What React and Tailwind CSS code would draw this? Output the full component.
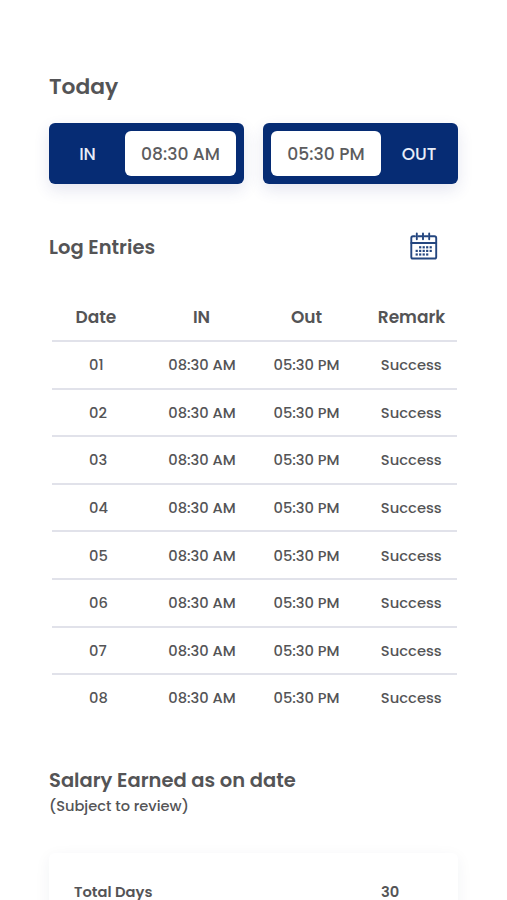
import React from 'react';

const entries = ['01', '02', '03', '04', '05', '06', '07', '08'].map((date) => ({
  date,
  timeIn: '08:30 AM',
  timeOut: '05:30 PM',
  remark: 'Success',
}));

const dots = [
  [10.2, 15.3], [13.7, 15.3], [17.2, 15.3], [20.7, 15.3],
  [6.7, 18.9], [10.2, 18.9], [13.7, 18.9], [17.2, 18.9], [20.7, 18.9],
  [6.7, 22.5], [10.2, 22.5], [13.7, 22.5], [17.2, 22.5],
];

const CalendarIcon = () => (
  <svg width="28" height="28" viewBox="0 0 28 28" fill="none" stroke="#24467f" strokeWidth="1.9" strokeLinecap="round">
    <path d="M5 4.2H3Q1.3 4.2 1.3 5.9V24.9Q1.3 26.5 2.9 26.5H24.6Q26.2 26.5 26.2 24.9V5.9Q26.2 4.2 24.5 4.2H20.5" />
    <path d="M1.3 11H26.2M8.2 4.2H12.2M14.6 4.2H18" />
    <path d="M6.8 1.4V7.2M13 1.4V7.2M19.2 1.4V7.2" />
    {dots.map(([x, y]) => (
      <rect key={`${x}-${y}`} x={x - 1.1} y={y - 1.1} width="2.2" height="2.2" fill="#24467f" stroke="none" />
    ))}
  </svg>
);

const App = () => {
  return (
    <div className="h-[900px] w-[507px] overflow-hidden bg-white pl-[49px] pr-[49px] pt-[71px] font-['Poppins','Inter',sans-serif] text-[#545456]">
      <h1 className="h-[52px] text-[21.8px] font-semibold leading-8"><span>Today</span></h1>

      {/* Punch times */}
      <div className="flex justify-between">
        <div className="flex h-[61px] w-[195px] items-center rounded-[6px] bg-[#062c74] pr-2 shadow-[0_6px_16px_rgba(40,50,130,0.12)]">
          <div className="flex-1 pl-px pt-0.5 text-center text-[17px] font-medium text-[#e8edf8]"><span>IN</span></div>
          <div className="flex h-[45px] w-[111px] items-center justify-center rounded-[6px] bg-white pt-0.5 text-[17.2px] font-medium text-[#5c5c5e]">
            <span>08:30 AM</span>
          </div>
        </div>
        <div className="flex h-[61px] w-[195px] items-center rounded-[6px] bg-[#062c74] pl-2 shadow-[0_6px_16px_rgba(40,50,130,0.12)]">
          <div className="flex h-[45px] w-[110px] items-center justify-center rounded-[6px] bg-white pt-0.5 text-[17.2px] font-medium text-[#5c5c5e]">
            <span>05:30 PM</span>
          </div>
          <div className="flex-1 pr-px pt-0.5 text-center text-[17px] font-medium text-[#e8edf8]"><span>OUT</span></div>
        </div>
      </div>

      {/* Log entries */}
      <div className="mt-12 flex h-7 items-start justify-between pr-[20px]">
        <h2 className="text-[19.5px] font-semibold leading-8"><span>Log Entries</span></h2>
        <CalendarIcon />
      </div>

      <div className="ml-[3px] mt-8 w-[405px]">
        <div className="flex h-[50px] border-b-2 border-[#e1e2ea] pt-1.5 text-[17px] font-semibold leading-[38px]">
          <div className="w-[97px] shrink-0 pl-[23.5px]"><span>Date</span></div>
          <div className="w-[105px] shrink-0 text-center"><span>IN</span></div>
          <div className="w-[105px] shrink-0 text-center"><span>Out</span></div>
          <div className="w-[105px] shrink-0 text-center"><span>Remark</span></div>
        </div>
        {entries.map((entry) => (
          <div
            key={entry.date}
            className="flex h-[47.6px] items-center border-b-2 border-[#e1e2ea] pt-px text-[14.7px] font-medium last:border-transparent"
          >
            <div className="w-[97.5px] shrink-0 pl-[37px]"><span>{entry.date}</span></div>
            <div className="w-[105px] shrink-0 text-center"><span>{entry.timeIn}</span></div>
            <div className="w-[104px] shrink-0 text-center"><span>{entry.timeOut}</span></div>
            <div className="w-[105.5px] shrink-0 text-center"><span>{entry.remark}</span></div>
          </div>
        ))}
      </div>

      {/* Salary */}
      <h2 className="mt-[42.4px] text-[19.5px] font-semibold leading-8"><span>Salary Earned as on date</span></h2>
      <p className="-mt-px text-[14.6px] font-medium leading-5"><span>(Subject to review)</span></p>

      <div className="mt-[37px] flex h-[80px] rounded-[6px] bg-white pl-[25px] pt-[27px] text-[14.7px] font-semibold leading-6 shadow-[0_4px_16px_rgba(40,50,80,0.06)]">
        <div className="w-[307px]"><span>Total Days</span></div>
        <div><span>30</span></div>
      </div>
    </div>
  );
};

export default App;
